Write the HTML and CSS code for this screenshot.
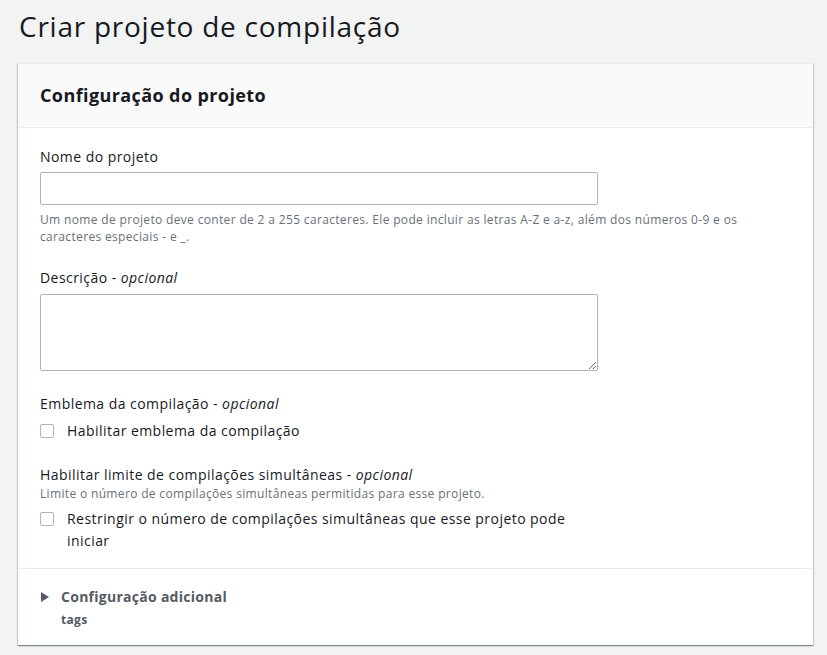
FILE: index.html
```html
<!DOCTYPE html>
<html lang="pt">
<head>
<meta charset="utf-8">
<title>Criar projeto de compilação</title>
<link rel="stylesheet" href="styles.css">
</head>
<body>
<div class="page">
  <h1 class="page-title">Criar projeto de compilação</h1>
  <div class="card">
    <div class="card-header">
      <h2 class="card-title">Configuração do projeto</h2>
    </div>
    <div class="card-body">
      <div class="field">
        <label class="label" for="nome">Nome do projeto</label>
        <input class="input" id="nome" type="text">
        <div class="hint">Um nome de projeto deve conter de 2 a 255 caracteres. Ele pode incluir as letras A-Z e a-z, além dos números 0-9 e os caracteres especiais - e _.</div>
      </div>
      <div class="field">
        <label class="label" for="desc">Descrição - <i>opcional</i></label>
        <textarea class="textarea" id="desc"></textarea>
      </div>
      <div class="field">
        <div class="label">Emblema da compilação - <i>opcional</i></div>
        <div class="check-row">
          <span class="box"></span>
          <span class="check-text">Habilitar emblema da compilação</span>
        </div>
      </div>
      <div class="field">
        <div class="label">Habilitar limite de compilações simultâneas - <i>opcional</i></div>
        <div class="desc">Limite o número de compilações simultâneas permitidas para esse projeto.</div>
        <div class="check-row">
          <span class="box"></span>
          <span class="check-text">Restringir o número de compilações simultâneas que esse projeto pode iniciar</span>
        </div>
      </div>
    </div>
    <div class="card-footer">
      <div class="expander">
        <span class="caret"></span>
        <span class="expander-title">Configuração adicional</span>
      </div>
      <div class="expander-sub">tags</div>
    </div>
  </div>
</div>
</body>
</html>
```

FILE: styles.css
```css
* { box-sizing: border-box; }
html, body { margin: 0; padding: 0; }
body {
  background: #f2f3f3;
  font-family: "Open Sans", "Liberation Sans", sans-serif;
  color: #16191f;
  font-size: 14px;
  line-height: 22px;
  letter-spacing: 0.45px;
}
.page {
  padding: 8px 14px 10px 18px;
}
.page-title {
  margin: 0 0 19px 1px;
  font-size: 28px;
  line-height: 36px;
  font-weight: 400;
  letter-spacing: 0.75px;
  color: #16191f;
}
.card {
  background: #fff;
  border-top: 1px solid #eaeded;
  box-shadow: 0 1px 1px 0 rgba(0,28,36,.3), 1px 1px 1px 0 rgba(0,28,36,.15), -1px 1px 1px 0 rgba(0,28,36,.15);
}
.card-header {
  background: #fafafa;
  padding: 20px 22px 21px;
  border-bottom: 1px solid #eaeded;
}
.card-title {
  margin: 0;
  font-size: 18px;
  line-height: 22px;
  font-weight: 700;
  letter-spacing: 0.4px;
}
.card-body {
  padding: 18px 22px 16px;
  display: flex;
  flex-direction: column;
  gap: 22px;
}
.field {
  display: flex;
  flex-direction: column;
}
.label {
  display: block;
  font-size: 14px;
  line-height: 22px;
}
.label i { font-style: italic; }
.input {
  margin-top: 4px;
  width: 558px;
  height: 33px;
  border: 1px solid #aab7b8;
  border-radius: 2px;
  background: #fff;
  font: inherit;
  padding: 4px 10px;
  outline: none;
}
.hint {
  margin-top: 6px;
  font-size: 12px;
  line-height: 17px;
  letter-spacing: 0.34px;
  color: #687078;
}
.textarea {
  margin-top: 5px;
  width: 558px;
  height: 77px;
  border: 1px solid #aab7b8;
  border-radius: 2px;
  background: #fff;
  font: inherit;
  padding: 4px 10px;
  outline: none;
  display: block;
}
.desc {
  font-size: 12px;
  line-height: 16px;
  letter-spacing: 0.34px;
  color: #687078;
}
.check-row {
  margin-top: 6px;
  display: flex;
  align-items: flex-start;
  gap: 13px;
}
.field:nth-child(3) .check-row { margin-top: 5px; }
.box {
  flex: none;
  width: 14px;
  height: 14px;
  margin-top: 4px;
  border: 1px solid #aab7b8;
  border-radius: 2px;
  background: #fff;
}
.check-text {
  max-width: 520px;
  font-size: 14px;
  line-height: 22px;
}
.card-footer {
  border-top: 1px solid #eaeded;
  padding: 17px 22px 17px;
}
.expander {
  display: flex;
  align-items: center;
  gap: 12px;
}
.caret {
  width: 0;
  height: 0;
  margin-left: 1px;
  border-top: 5px solid transparent;
  border-bottom: 5px solid transparent;
  border-left: 8px solid #545b64;
}
.expander-title {
  font-size: 14px;
  line-height: 22px;
  font-weight: 700;
  letter-spacing: 0.27px;
  color: #545b64;
}
.expander-sub {
  margin-top: 4px;
  margin-left: 21px;
  font-size: 12px;
  line-height: 16px;
  font-weight: 700;
  letter-spacing: 0.3px;
  color: #545b64;
}
```
